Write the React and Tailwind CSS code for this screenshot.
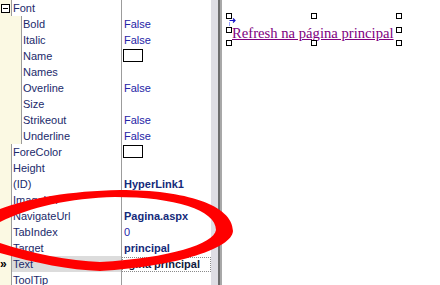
import React from 'react'

const rows = [
  { label: 'Font', expander: true },
  { label: 'Bold', value: 'False', sub: true },
  { label: 'Italic', value: 'False', sub: true },
  { label: 'Name', swatch: true, sub: true },
  { label: 'Names', sub: true },
  { label: 'Overline', value: 'False', sub: true },
  { label: 'Size', sub: true },
  { label: 'Strikeout', value: 'False', sub: true },
  { label: 'Underline', value: 'False', sub: true },
  { label: 'ForeColor', swatch: true },
  { label: 'Height' },
  { label: '(ID)', value: 'HyperLink1', bold: true },
  { label: 'ImageUrl' },
  { label: 'NavigateUrl', value: 'Pagina.aspx', bold: true },
  { label: 'TabIndex', value: '0' },
  { label: 'Target', value: 'principal', bold: true },
  { label: 'Text', value: 'Página principal', editing: true },
  { label: 'ToolTip' },
]

const Row = ({ r }) => (
  <div className="flex h-4 leading-4">
    <div className={`${r.sub ? 'w-[21px]' : 'w-[11px]'} shrink-0 bg-[#fbf9e3] flex items-center`}>
      {r.expander && (
        <div className="ml-[1px] w-[9px] h-[9px] border border-black bg-white flex items-center justify-center">
          <div className="w-[5px] h-px bg-black" />
        </div>
      )}
      {r.editing && <span className="text-[12px] font-bold leading-4 text-black">»</span>}
    </div>
    <div className={`${r.sub ? 'w-[100px]' : 'w-[110px]'} shrink-0 border-l border-[#9c9c9c] pl-px text-[#1b2a6b] ${r.editing ? 'bg-[#dcdcdc]' : ''}`}>
      {r.label}
    </div>
    <div className="flex-1 border-l border-[#9c9c9c] overflow-hidden">
      {r.swatch && <div className="ml-[1px] mt-[1px] w-[20px] h-[13px] border border-black bg-white" />}
      {r.value && !r.editing && (
        <span className={`pl-[2px] ${r.bold ? 'font-bold text-[#142a7a]' : 'text-[#2424a6]'}`}>{r.value}</span>
      )}
      {r.editing && (
        <div className="h-[15px] mt-px border border-dotted border-[#8a8a8a] overflow-hidden leading-[13px]">
          <span className="block -ml-[8px] font-bold text-[#101a40] whitespace-nowrap">{r.value}</span>
        </div>
      )}
    </div>
  </div>
)

const Handle = ({ className }) => (
  <div className={`absolute w-[6px] h-[6px] border border-black bg-white ${className}`} />
)

export default function App() {
  return (
    <div className="relative w-[440px] h-[285px] overflow-hidden bg-white flex" style={{ fontFamily: '"Liberation Sans", Arial, sans-serif' }}>
      <div className="w-[211px] shrink-0 text-[11px] bg-white">
        {rows.map((r) => <Row key={r.label} r={r} />)}
      </div>
      <div className="w-[7px] shrink-0 bg-[#dfdee4]" />
      <div className="w-[2px] shrink-0 bg-[#6e6e6e]" />
      <div className="w-[2px] shrink-0 bg-[#a8a8a8]" />
      <div className="flex-1 bg-white pl-[7px] pt-[16px]">
        <div className="relative w-[170px] h-[27px] pl-[3px] pt-[5px]">
          <a className="text-[14.67px] leading-[17px] text-[#800080] underline whitespace-nowrap" style={{ fontFamily: '"Liberation Serif", "Times New Roman", serif' }}>
            Refresh na página principal
          </a>
          <Handle className="left-0 top-0 -translate-x-1/2 -translate-y-1/2" />
          <Handle className="left-1/2 top-0 -translate-x-1/2 -translate-y-1/2" />
          <Handle className="right-0 top-0 translate-x-1/2 -translate-y-1/2" />
          <Handle className="left-0 top-1/2 -translate-x-1/2 -translate-y-1/2" />
          <Handle className="right-0 top-1/2 translate-x-1/2 -translate-y-1/2" />
          <Handle className="left-0 bottom-0 -translate-x-1/2 translate-y-1/2" />
          <Handle className="left-1/2 bottom-0 -translate-x-1/2 translate-y-1/2" />
          <Handle className="right-0 bottom-0 translate-x-1/2 translate-y-1/2" />
          <svg className="absolute left-0 top-[1px]" width="8" height="10" viewBox="0 0 8 10">
            <path d="M0.5 3.5 H6 M4 1.5 L6 3.5 L4 5.5" stroke="#1414c8" strokeWidth="1.2" fill="none" />
            <path d="M0.5 5 V9" stroke="#9aa4ff" strokeWidth="1" />
          </svg>
        </div>
      </div>
      <svg className="absolute left-0 top-0 pointer-events-none" width="440" height="285" viewBox="0 0 440 285">
        <path
          fillRule="evenodd"
          fill="#ff0000"
          d="M233 231 C232 248 180 266 100 271 C70 270 35 263 0 253 C-30 245 -35 217 0 209 C30 198 70 191 120 190 C185 190 233 205 233 231 Z M216 230 C214 244 170 258 100 262 C70 261 30 253 0 243 C-15 238 -15 228 0 222 C30 207 70 198 115 197 C175 197 216 210 216 230 Z"
        />
      </svg>
    </div>
  )
}
